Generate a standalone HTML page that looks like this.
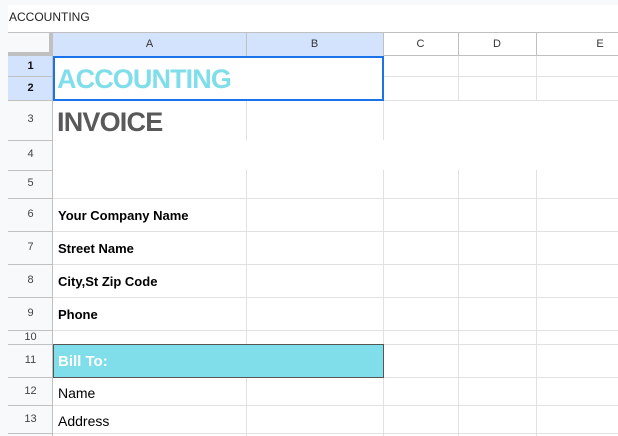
<!DOCTYPE html>
<html><head><style>
body{margin:0;width:618px;height:436px;overflow:hidden;background:#fff;font-family:"Liberation Sans",Arial,sans-serif;position:relative}
div{position:absolute;box-sizing:border-box}
.h{height:1px;background:#e1e1e1}
.v{width:1px;background:#e1e1e1}
.rn{left:8px;width:45px;text-align:center;font-size:11px;color:#444}
.ch{top:32px;height:24px;line-height:24px;text-align:center;font-size:11px;color:#333}
.t{left:58px;font-size:13px;font-weight:bold;color:#000}
</style></head><body>
<div style="left:0;top:0;width:618px;height:5px;background:#f8f9fa"></div>
<div style="left:0;top:0;width:8px;height:436px;background:#f8f9fa"></div>
<div style="left:9px;top:10px;font-size:12px;color:#222">ACCOUNTING</div>
<div style="left:8px;top:32px;width:610px;height:24px;background:#fff;border-top:1px solid #c0c0c0;border-bottom:1px solid #c0c0c0"></div>
<div style="left:8px;top:32px;width:45px;height:24px;background:#f8f9fa;border-right:4px solid #c0c0c0;border-bottom:4px solid #c0c0c0;border-top:1px solid #c0c0c0"></div>
<div style="left:53px;top:33px;width:330px;height:23px;background:#d3e3fd"></div>
<div class="ch" style="left:53px;width:193px">A</div>
<div class="ch" style="left:246px;width:137px">B</div>
<div class="ch" style="left:383px;width:75px">C</div>
<div class="ch" style="left:458px;width:78px">D</div>
<div class="ch" style="left:536px;width:128px">E</div>
<div style="left:246px;top:33px;width:1px;height:23px;background:#c0c0c0"></div>
<div style="left:383px;top:33px;width:1px;height:23px;background:#c0c0c0"></div>
<div style="left:458px;top:33px;width:1px;height:23px;background:#c0c0c0"></div>
<div style="left:536px;top:33px;width:1px;height:23px;background:#c0c0c0"></div>
<div style="left:8px;top:56px;width:45px;height:380px;background:#f8f9fa;border-right:1px solid #c0c0c0"></div>
<div style="left:8px;top:56px;width:45px;height:44px;background:#d3e3fd;border-right:1px solid #c0c0c0"></div>
<div class="rn" style="top:60px;font-weight:bold;color:#111">1</div>
<div class="rn" style="top:82px;font-weight:bold;color:#111">2</div>
<div class="rn" style="top:113px">3</div>
<div class="rn" style="top:148px">4</div>
<div class="rn" style="top:177px">5</div>
<div class="rn" style="top:208px">6</div>
<div class="rn" style="top:241px">7</div>
<div class="rn" style="top:274px">8</div>
<div class="rn" style="top:307px">9</div>
<div class="rn" style="top:331px">10</div>
<div class="rn" style="top:354px">11</div>
<div class="rn" style="top:385px">12</div>
<div class="rn" style="top:413px">13</div>
<div class="h" style="left:8px;top:76px;width:45px;background:#c0c0c0"></div>
<div class="h" style="left:8px;top:100px;width:45px;background:#c0c0c0"></div>
<div class="h" style="left:8px;top:140px;width:45px;background:#c0c0c0"></div>
<div class="h" style="left:8px;top:170px;width:45px;background:#c0c0c0"></div>
<div class="h" style="left:8px;top:198px;width:45px;background:#c0c0c0"></div>
<div class="h" style="left:8px;top:231px;width:45px;background:#c0c0c0"></div>
<div class="h" style="left:8px;top:264px;width:45px;background:#c0c0c0"></div>
<div class="h" style="left:8px;top:297px;width:45px;background:#c0c0c0"></div>
<div class="h" style="left:8px;top:330px;width:45px;background:#c0c0c0"></div>
<div class="h" style="left:8px;top:344px;width:45px;background:#c0c0c0"></div>
<div class="h" style="left:8px;top:377px;width:45px;background:#c0c0c0"></div>
<div class="h" style="left:8px;top:405px;width:45px;background:#c0c0c0"></div>
<div class="h" style="left:8px;top:433px;width:45px;background:#c0c0c0"></div>
<div class="h" style="left:383px;top:76px;width:235px"></div>
<div class="h" style="left:53px;top:100px;width:565px"></div>
<div class="h" style="left:53px;top:198px;width:565px"></div>
<div class="h" style="left:53px;top:231px;width:565px"></div>
<div class="h" style="left:53px;top:264px;width:565px"></div>
<div class="h" style="left:53px;top:297px;width:565px"></div>
<div class="h" style="left:53px;top:330px;width:565px"></div>
<div class="h" style="left:53px;top:344px;width:565px"></div>
<div class="h" style="left:53px;top:377px;width:565px"></div>
<div class="h" style="left:53px;top:405px;width:565px"></div>
<div class="h" style="left:53px;top:433px;width:565px"></div>
<div class="v" style="left:246px;top:100px;height:40px"></div>
<div class="v" style="left:383px;top:56px;height:84px"></div>
<div class="v" style="left:458px;top:56px;height:44px"></div>
<div class="v" style="left:536px;top:56px;height:44px"></div>
<div class="v" style="left:246px;top:170px;height:174px"></div>
<div class="v" style="left:246px;top:377px;height:59px"></div>
<div class="v" style="left:383px;top:170px;height:266px"></div>
<div class="v" style="left:458px;top:170px;height:266px"></div>
<div class="v" style="left:536px;top:170px;height:266px"></div>
<div style="left:53px;top:56px;width:331px;height:45px;border:2px solid #1a73e8"></div>
<div style="left:57px;top:64px;font-size:27px;font-weight:bold;color:#80deea;letter-spacing:-0.9px">ACCOUNTING</div>
<div style="left:57px;top:107px;font-size:27px;font-weight:bold;color:#595959;letter-spacing:-0.8px">INVOICE</div>
<div class="t" style="top:208px">Your Company Name</div>
<div class="t" style="top:241px">Street Name</div>
<div class="t" style="top:274px">City,St Zip Code</div>
<div class="t" style="top:307px">Phone</div>
<div style="left:53px;top:344px;width:331px;height:34px;background:#80deea;border:1px solid #555"></div>
<div style="left:58px;top:353px;font-size:15px;font-weight:bold;color:#fff">Bill To:</div>
<div style="left:58px;top:385px;font-size:14px;color:#000">Name</div>
<div style="left:58px;top:413px;font-size:14px;color:#000">Address</div>
</body></html>
